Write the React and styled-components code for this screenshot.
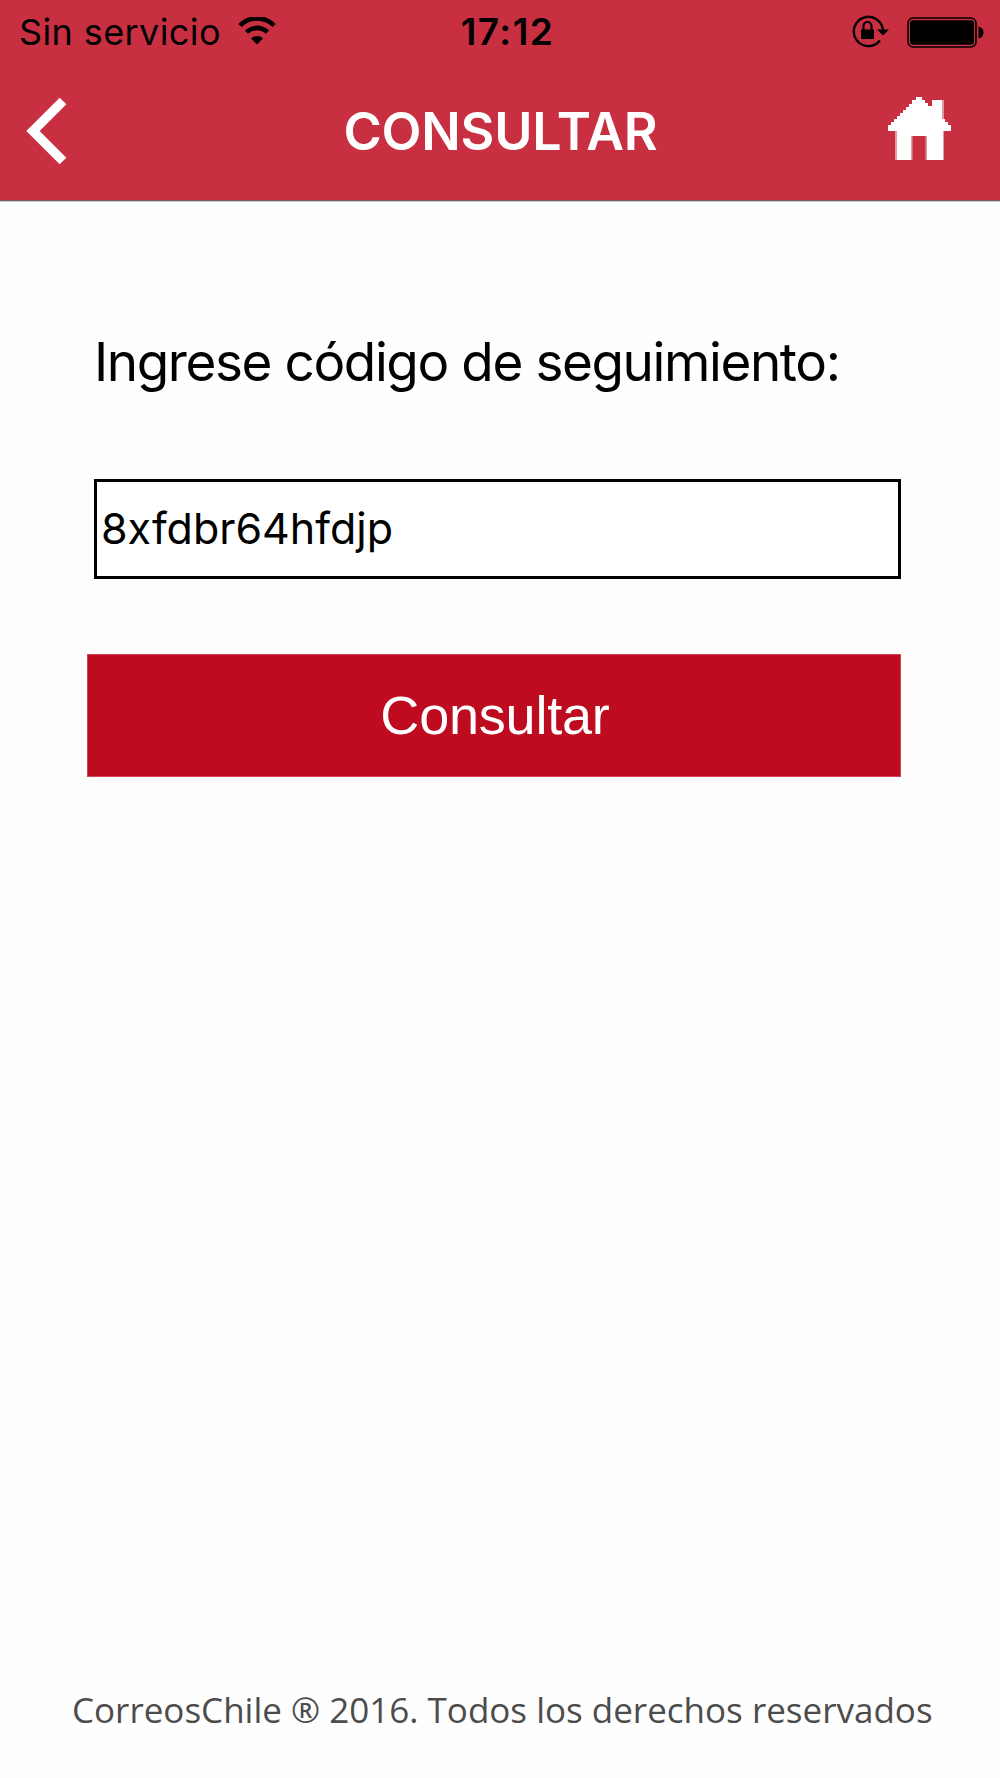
import React, { useState } from 'react';
import styled, { createGlobalStyle } from 'styled-components';

const GlobalStyle = createGlobalStyle`
  * {
    box-sizing: border-box;
  }
  body {
    margin: 0;
    background: #fefefe;
    font-family: Inter, "Liberation Sans", sans-serif;
  }
`

const Screen = styled.div`
  display: flex;
  flex-direction: column;
  height: 1778px;
  width: 1000px;
  overflow: hidden;
`

const Header = styled.header`
  background: #c83041;
  height: 201px;
  margin-bottom: 1px;
  border-bottom: 1px solid #7a5a5e;
  box-shadow: 0 1px 0 #bccdd0;
`

const StatusBar = styled.div`
  display: grid;
  grid-template-columns: 1fr auto 1fr;
  align-items: center;
  height: 64px;
  padding: 0 16px 0 19px;
  color: #000;
`

const StatusSide = styled.div`
  display: flex;
  align-items: center;
  justify-content: ${({ $end }) => ($end ? "flex-end" : "flex-start")};
  gap: 17px;
`

const StatusText = styled.span`
  font-size: 36px;
  line-height: 64px;
  letter-spacing: 0.4px;
  white-space: nowrap;
`

const Clock = styled(StatusText)`
  padding-left: 12px;
  font-size: 37px;
  font-weight: 600;
  letter-spacing: 1.5px;
`

const NavBar = styled.nav`
  display: flex;
  align-items: center;
  justify-content: space-between;
  height: 136px;
  padding: 0 49px 0 26px;
`

const NavButton = styled.button`
  display: flex;
  width: 63px;
  padding: 0 0 ${({ $lift }) => $lift}px;
  border: none;
  background: transparent;
  cursor: pointer;
`

const Title = styled.h1`
  margin: 0 0 0 24px;
  color: white;
  font-size: 52px;
  font-weight: 600;
  line-height: 134px;
  letter-spacing: -0.2px;
`

const Form = styled.form`
  display: flex;
  flex-direction: column;
  flex: 1;
  padding: 128px 99px 0 87px;
`

const Label = styled.label`
  padding-left: 7px;
  font-size: 53px;
  line-height: 64px;
  letter-spacing: -1.4px;
  color: #000;
  white-space: nowrap;
`

const CodeInput = styled.input`
  height: 100px;
  margin: 85px 0 75px 7px;
  padding: 0 4px 2px;
  border: 3px solid #000;
  border-radius: 0;
  background: white;
  color: #000;
  font-family: inherit;
  font-size: 43px;

  &:focus {
    outline: none;
  }
`

const Submit = styled.button`
  height: 123px;
  padding: 0 0 2px 2px;
  border: 1px solid #cf4654;
  background: #bf0b20;
  color: white;
  font-family: "Liberation Sans", Arial, sans-serif;
  font-size: 54px;
  letter-spacing: -0.2px;
  cursor: pointer;
`

const Footer = styled.footer`
  height: 100px;
  padding-left: 72px;
  color: #4c4c4c;
  font-family: "Open Sans", sans-serif;
  font-size: 35px;
  line-height: 64px;
  white-space: nowrap;
`

const WifiIcon = () => (
  <svg width="38" height="30" viewBox="0 0 38 30">
    <path d="M2 8.5a24 24 0 0 1 34 0" fill="none" stroke="#000" strokeWidth="4.6" />
    <path d="M8.5 15.2a15 15 0 0 1 21 0" fill="none" stroke="#000" strokeWidth="4.6" />
    <path d="M13 21.5a8.5 8.5 0 0 1 12 0L19 27.5z" />
  </svg>
)

const RotationLockIcon = () => (
  <svg width="38" height="34" viewBox="0 0 38 34">
    <path d="M27.9 25.5A14.6 14.6 0 1 1 31 16" fill="none" stroke="#000" strokeWidth="2.4" />
    <path d="M25 14.5h12l-6 6z" />
    <path d="M9 14.5h13v9.5H9z" />
    <path d="M11.5 15V11a4 4 0 0 1 8 0v4" fill="none" stroke="#000" strokeWidth="2.2" />
  </svg>
)

const BatteryIcon = () => (
  <svg width="77" height="31" viewBox="0 0 77 31">
    <rect x="1" y="1" width="68" height="29" rx="5" fill="none" stroke="#000" strokeWidth="1.6" />
    <rect x="3" y="3.3" width="64" height="24.4" rx="3" />
    <path d="M71.5 9.5c3 .5 5 2.5 5 6s-2 5.5-5 6z" />
  </svg>
)

const BackIcon = () => (
  <svg width="42" height="68" viewBox="0 0 42 68">
    <path d="M37 4L7 34l30 30" fill="none" stroke="white" strokeWidth="9.5" />
  </svg>
)

// stepped roof, plus a faint edge on the walls and the door
const HomeIcon = () => (
  <svg width="63" height="63" viewBox="0 0 63 63">
    <path
      fill="white"
      d="M28 0h6v3h3v3h3v3h4V3h10v19h3v3h3v3h3v6h-8v29H39V39H23v24H9V34H0v-6h3v-3h3v-3h3v-3h3v-3h3v-3h3V10h3V7h3V3h4z"
    />
    <path
      fill="white"
      fillOpacity="0.5"
      d="M54 3h2v19h-2zM7 34h2v29H7zM55 34h1v29h-1zM23 37.500h16V39H23zM23 39h1.500v24H23zM37.500 39H39v24h-1.500z"
    />
  </svg>
)

const App = () => {
  const [code, setCode] = useState("8xfdbr64hfdjp");
  return (
    <>
      <GlobalStyle />
      <Screen>
        <Header>
          <StatusBar>
            <StatusSide>
              <StatusText>Sin servicio</StatusText>
              <WifiIcon />
            </StatusSide>
            <Clock>17:12</Clock>
            <StatusSide $end>
              <RotationLockIcon />
              <BatteryIcon />
            </StatusSide>
          </StatusBar>
          <NavBar>
            <NavButton $lift={2} aria-label="Volver"><BackIcon /></NavButton>
            <Title>CONSULTAR</Title>
            <NavButton $lift={7} aria-label="Inicio"><HomeIcon /></NavButton>
          </NavBar>
        </Header>
        <Form onSubmit={(e) => e.preventDefault()}>
          <Label htmlFor="code">Ingrese código de seguimiento:</Label>
          <CodeInput id="code" value={code} onChange={(e) => setCode(e.target.value)} />
          <Submit type="submit">Consultar</Submit>
        </Form>
        <Footer>CorreosChile ® 2016. Todos los derechos reservados</Footer>
      </Screen>
    </>
  )
}

export default App
